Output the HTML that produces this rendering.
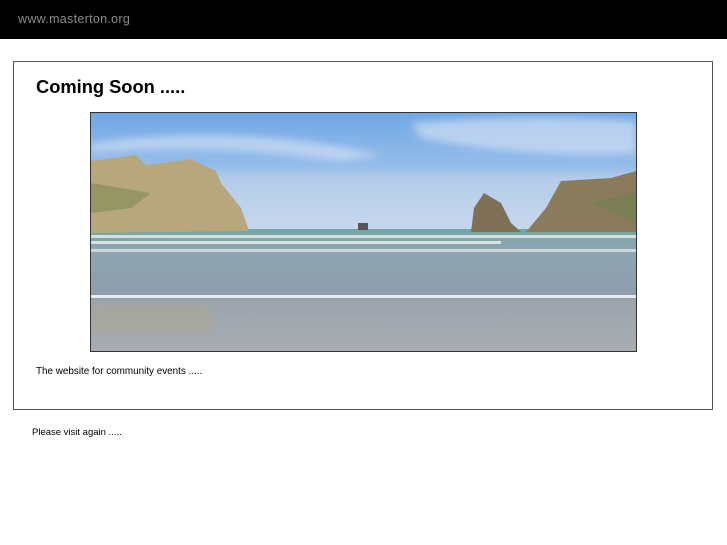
<!DOCTYPE html>
<html><head><style>
body{margin:0;background:#fff;font-family:"Liberation Sans",sans-serif;width:727px;height:545px;position:relative;overflow:hidden}
.top{position:absolute;left:0;top:0;width:727px;height:39px;background:#000}
.top span{position:absolute;left:18px;top:12px;color:#8a8a8a;font-size:12.5px;letter-spacing:.3px}
.box{position:absolute;left:13px;top:61px;width:698px;height:347px;border:1px solid #555}
h1{position:absolute;left:36px;top:76px;margin:0;font-size:18.3px;font-weight:bold;color:#000}
.img{position:absolute;left:90px;top:112px;width:545px;height:238px;border:1px solid #333}
.t1{position:absolute;left:36px;top:366px;font-size:9.9px}
.t2{position:absolute;left:32px;top:427px;font-size:9.5px}
</style></head><body>
<div class="top"><span>www.masterton.org</span></div>
<div class="box"></div>
<h1>Coming Soon .....</h1>
<svg class="img" viewBox="0 0 545 238" preserveAspectRatio="none">
<defs>
<linearGradient id="sky" x1="0" y1="0" x2="0" y2="1"><stop offset="0" stop-color="#6fa7e6"/><stop offset="1" stop-color="#c3d6ee"/></linearGradient>
<linearGradient id="sea" x1="0" y1="0" x2="0" y2="1"><stop offset="0" stop-color="#6fa7a0"/><stop offset=".3" stop-color="#8fa6b2"/><stop offset="1" stop-color="#8d9cab"/></linearGradient>
<linearGradient id="sand" x1="0" y1="0" x2="0" y2="1"><stop offset="0" stop-color="#9ba3ab"/><stop offset="1" stop-color="#a7adb3"/></linearGradient>
<filter id="b"><feGaussianBlur stdDeviation="4"/></filter>
</defs>
<rect width="545" height="116" fill="url(#sky)"/>
<g filter="url(#b)">
<path d="M0 30 Q150 10 290 42 L250 48 Q120 30 0 40Z" fill="#dbe6f3" opacity=".6"/>
<path d="M320 10 Q450 0 545 8 L545 40 Q430 45 330 25Z" fill="#dfe8f4" opacity=".6"/>
<rect y="60" width="545" height="56" fill="#c9d7ea" opacity=".5"/>
</g>
<rect y="116" width="545" height="70" fill="url(#sea)"/>
<path d="M0 48 L45 42 L55 52 L100 46 L125 58 L130 70 L150 95 L158 118 L0 120Z" fill="#b8a77c"/>
<path d="M0 70 Q30 75 60 80 L40 95 L0 100Z" fill="#7f8a55" opacity=".6"/>
<path d="M380 119 L383 95 L393 80 L410 90 L420 110 L430 119Z" fill="#7d7055"/>
<path d="M435 119 L455 95 L470 68 L520 65 L545 58 L545 119Z" fill="#8a7b5c"/>
<path d="M500 90 L545 80 L545 110 Z" fill="#6f8050" opacity=".6"/>
<rect x="267" y="110" width="10" height="7" fill="#555"/>
<rect y="122" width="545" height="3" fill="#e8eef0" opacity=".8"/>
<rect y="128" width="410" height="3" fill="#eef2f3" opacity=".8"/>
<rect y="136" width="545" height="3" fill="#e5ebee" opacity=".7"/>
<rect y="186" width="545" height="52" fill="url(#sand)"/>
<rect y="182" width="545" height="3" fill="#e8ecee"/>
<rect y="192" width="120" height="30" fill="#b3a88c" opacity=".4" filter="url(#b)"/>
</svg>
<div class="t1">The website for community events .....</div>
<div class="t2">Please visit again .....</div>
</body></html>
